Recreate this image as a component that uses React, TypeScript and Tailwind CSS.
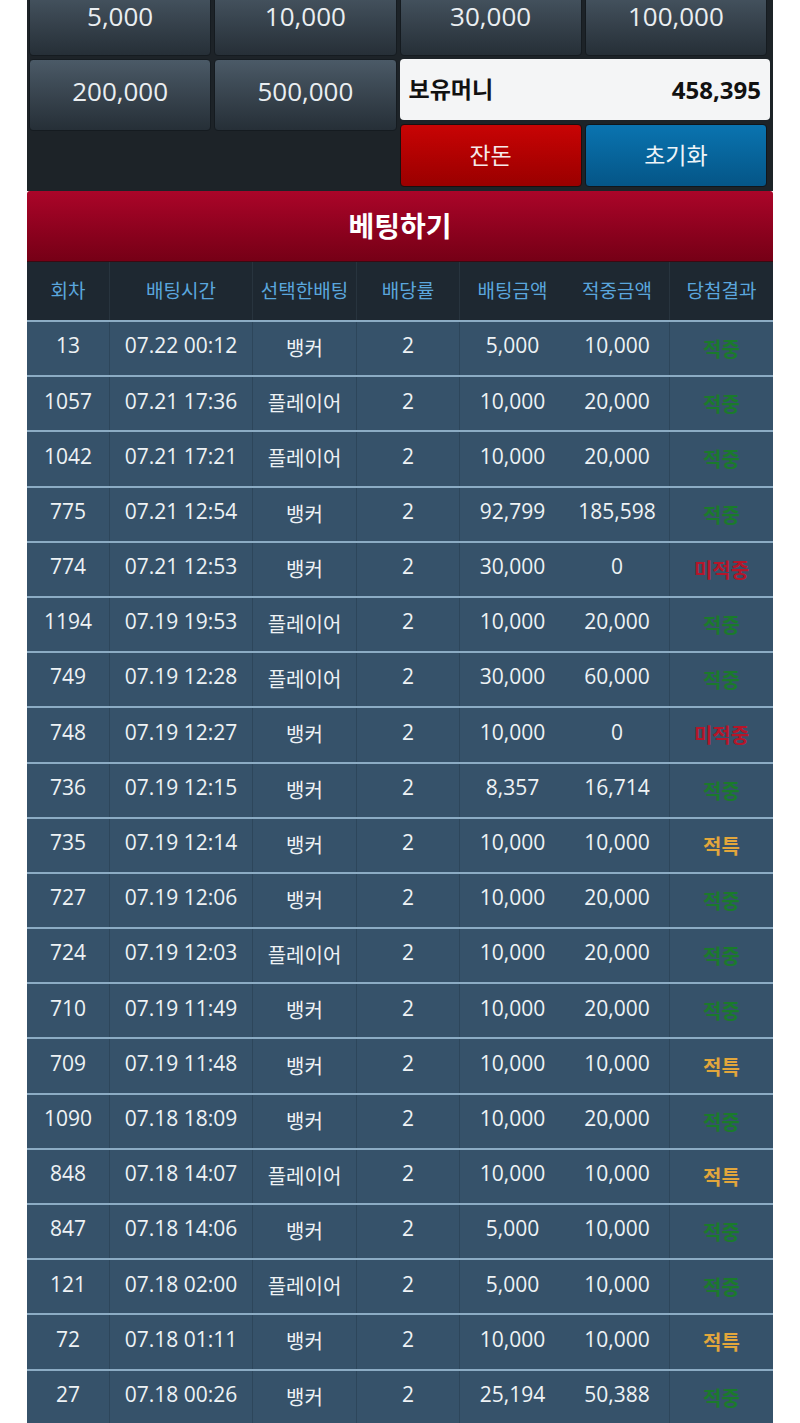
import React from 'react';

type Result = '적중' | '미적중' | '적특';

const rows: [string, string, string, string, string, string, Result][] = [
  ['13', '07.22 00:12', '뱅커', '2', '5,000', '10,000', '적중'],
  ['1057', '07.21 17:36', '플레이어', '2', '10,000', '20,000', '적중'],
  ['1042', '07.21 17:21', '플레이어', '2', '10,000', '20,000', '적중'],
  ['775', '07.21 12:54', '뱅커', '2', '92,799', '185,598', '적중'],
  ['774', '07.21 12:53', '뱅커', '2', '30,000', '0', '미적중'],
  ['1194', '07.19 19:53', '플레이어', '2', '10,000', '20,000', '적중'],
  ['749', '07.19 12:28', '플레이어', '2', '30,000', '60,000', '적중'],
  ['748', '07.19 12:27', '뱅커', '2', '10,000', '0', '미적중'],
  ['736', '07.19 12:15', '뱅커', '2', '8,357', '16,714', '적중'],
  ['735', '07.19 12:14', '뱅커', '2', '10,000', '10,000', '적특'],
  ['727', '07.19 12:06', '뱅커', '2', '10,000', '20,000', '적중'],
  ['724', '07.19 12:03', '플레이어', '2', '10,000', '20,000', '적중'],
  ['710', '07.19 11:49', '뱅커', '2', '10,000', '20,000', '적중'],
  ['709', '07.19 11:48', '뱅커', '2', '10,000', '10,000', '적특'],
  ['1090', '07.18 18:09', '뱅커', '2', '10,000', '20,000', '적중'],
  ['848', '07.18 14:07', '플레이어', '2', '10,000', '10,000', '적특'],
  ['847', '07.18 14:06', '뱅커', '2', '5,000', '10,000', '적중'],
  ['121', '07.18 02:00', '플레이어', '2', '5,000', '10,000', '적중'],
  ['72', '07.18 01:11', '뱅커', '2', '10,000', '10,000', '적특'],
  ['27', '07.18 00:26', '뱅커', '2', '25,194', '50,388', '적중'],
];

const resultColor: Record<Result, string> = {
  '적중': 'text-[#1b7a2c]',
  '미적중': 'text-[#b5162a]',
  '적특': 'text-[#e2a63c]',
};

const headers = ['회차', '배팅시간', '선택한배팅', '배당률', '배팅금액', '적중금액', '당첨결과'];
const cols = 'grid grid-cols-[83px_143px_104px_103px_105px_105px_103px]';
// divider after each column (none between 배팅금액 / 적중금액)
const divider = [true, true, true, true, false, true, false];

const ChipButton: React.FC<{ label: string }> = ({ label }) => (
  <button className="h-[72px] pb-[8px] rounded-[4px] border border-[#151b20] bg-gradient-to-b from-[#4b5a67] to-[#262f37] text-[26px] text-[#eaeef1]">
    {label}
  </button>
);

const cellClass = (i: number, c: string) => {
  if (i === 6) return `pt-[3px] text-[20px] font-bold ${resultColor[c as Result]}`;
  if (i === 2) return 'pt-[1px] text-[20px] text-[#eef2f5]';
  return 'pb-[5px] text-[21px] text-[#eef2f5]';
};

const App: React.FC = () => {
  return (
    <div
      className="min-h-[1423px] bg-white overflow-hidden"
      style={{ fontFamily: '"Open Sans", "Noto Sans CJK KR", sans-serif' }}
    >
      <div className="mx-[27px] w-[746px]">
        {/* 칩 버튼 */}
        <div className="bg-[#1d2328] pl-[2px] pr-[6px] pb-[4px]">
          <div className="grid grid-cols-4 gap-x-[3px] -mt-[16px]">
            <ChipButton label="5,000" />
            <ChipButton label="10,000" />
            <ChipButton label="30,000" />
            <ChipButton label="100,000" />
          </div>
          <div className="mt-[3px] grid grid-cols-4 gap-x-[3px]">
            <div className="col-span-2 grid grid-cols-2 gap-x-[3px] items-start">
              <ChipButton label="200,000" />
              <ChipButton label="500,000" />
            </div>
            <div className="col-span-2 flex flex-col gap-[4px]">
              <div className="h-[61px] mr-[-3px] rounded-[4px] bg-[#f4f5f6] flex items-center justify-between px-[9px] font-bold text-[#111]">
                <span className="text-[23px]">보유머니</span>
                <span className="text-[24px]">458,395</span>
              </div>
              <div className="grid grid-cols-2 gap-x-[3px]">
                <button className="h-[63px] rounded-[4px] border border-[#1a1010] bg-gradient-to-b from-[#c80404] to-[#9a0000] text-[23px] text-[#f6eaea]">
                  잔돈
                </button>
                <button className="h-[63px] rounded-[4px] border border-[#10161c] bg-gradient-to-b from-[#0a74b0] to-[#055587] text-[23px] text-[#eef4f8]">
                  초기화
                </button>
              </div>
            </div>
          </div>
        </div>

        {/* 베팅하기 */}
        <div className="h-[71px] rounded-t-[3px] bg-gradient-to-b from-[#ab0529] to-[#760016] flex items-center justify-center border-b border-[#3a0a12]">
          <span className="text-[28px] font-bold text-white">베팅하기</span>
        </div>

        {/* 헤더 */}
        <div className={`${cols} h-[58px] bg-[#1e2831]`}>
          {headers.map((h, i) => (
            <div
              key={h}
              className={`flex items-center justify-center text-[19px] text-[#5aa6dd] ${divider[i] ? 'border-r border-[#28343e]' : ''}`}
            >
              {h}
            </div>
          ))}
        </div>

        {/* 내역 */}
        {rows.map((r, ri) => (
          <div key={ri} className={`${cols} h-[55.2px] bg-[#36526a] border-t-2 border-[#8cacc4]`}>
            {r.map((c, i) => (
              <div
                key={i}
                className={`flex items-center justify-center ${cellClass(i, c)} ${divider[i] ? 'border-r border-[#2d465b]' : ''}`}
              >
                {c}
              </div>
            ))}
          </div>
        ))}
      </div>
    </div>
  );
};

export default App;
